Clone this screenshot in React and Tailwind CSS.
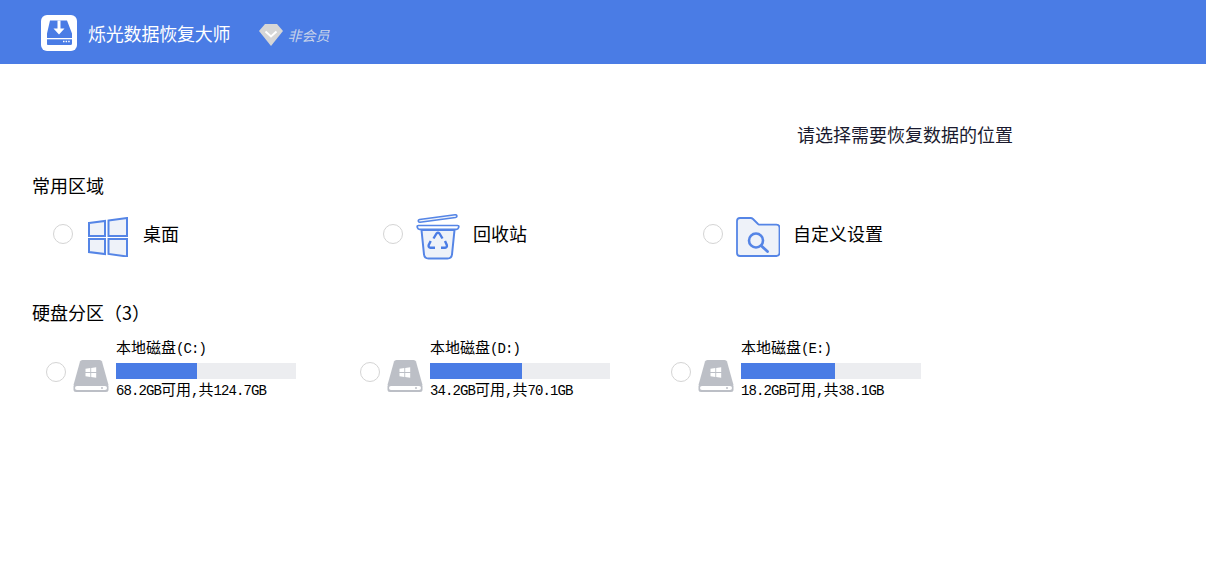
const cjk = 'font-["Noto_Sans_CJK_SC","Liberation_Sans",sans-serif]';

function Radio({ className = '' }) {
  return <div className={`w-5 h-5 rounded-full border border-[#d4d4d4] bg-white shrink-0 ${className}`} />;
}

function AppLogo() {
  return (
    <svg width="36" height="36" viewBox="0 0 36 36">
      <rect width="36" height="36" rx="6" fill="#fff" />
      <path d="M9 5.500h17l5 13v10a1.500 1.500 0 0 1-1.500 1.500h-23A1.500 1.500 0 0 1 6 28.500V18.500z" fill="#4a7ce5" />
      <path d="M6 23h25v1.300H6z" fill="#fff" />
      <path d="M22 25.800h1.500v1.400H22zM24.600 25.800h1.500v1.400h-1.500zM27.200 25.800h1.500v1.400h-1.500z" fill="#fff" />
      <path d="M16.500 5.500h3v8h4l-5.500 6-5.500-6h4z" fill="#fff" />
    </svg>
  );
}

function Diamond() {
  return (
    <svg width="24" height="22" viewBox="0 0 24 22">
      <path d="M6 0h12l6 7-12 15L0 7z" fill="#d6d6d6" />
      <path d="M6.500 7.500 12 12.500l5.500-5" fill="none" stroke="#fff" strokeWidth="2" />
    </svg>
  );
}

function WindowsIcon() {
  return (
    <svg width="40" height="40" viewBox="0 0 40 40" fill="#eef2f9" stroke="#5585e6" strokeWidth="2">
      <path d="M1 6 17 4v15H1z" />
      <path d="M20.500 3.500 39 1v18H20.500z" />
      <path d="M1 22h16v15L1 35z" />
      <path d="M20.500 22H39v17.500l-18.500-2.500z" />
    </svg>
  );
}

function RecycleIcon() {
  return (
    <svg width="44" height="46" viewBox="0 0 44 46" fill="none" stroke="#5585e6">
      <path d="M3.500 5.500 39 .8q1.700-.2 1.900 1.100.2 1.300-1.400 1.600L4 8.200q-1.500.2-1.700-1.100-.2-1.300 1.200-1.600z" strokeWidth="1.600" fill="#eef2f9" />
      <path d="M5.500 16l2.500 24.500q.5 4 4.500 4h19q4 0 4.500-4L38.500 16z" fill="#eef2f9" strokeWidth="2" />
      <path d="M2.500 11.500h39q1.500 0 1.300 1.300l-.3 1q-.4 1.500-2 1.500H3.500q-1.600 0-2-1.500l-.3-1q-.2-1.300 1.300-1.300z" fill="#fff" strokeWidth="1.700" />
      <g strokeWidth="2.400" strokeLinejoin="round" stroke="#4a7ce5">
        <path d="M17.500 24.500 20.500 19.500q1.500-1.500 3 0l3 5" />
        <path d="M29 27 30.800 31q.6 2.500-1.800 2.800H25" />
        <path d="M19 33.800h-4.500q-2.400-.3-1.800-2.800l2-4" />
      </g>
    </svg>
  );
}

function FolderIcon() {
  return (
    <svg width="44" height="40" viewBox="0 0 44 40">
      <path d="M1 4q0-3 3-3h10.500q1.500 0 2.500 1l5 5q1 .7 2 .7h16.500q3 0 3 3V36q0 3-3 3H4q-3 0-3-3z" fill="#eef2f9" stroke="#5585e6" strokeWidth="1.800" />
      <circle cx="20" cy="23.500" r="7" fill="none" stroke="#5585e6" strokeWidth="2.600" />
      <path d="M25.500 29l6 5.500" stroke="#5585e6" strokeWidth="2.800" strokeLinecap="round" />
    </svg>
  );
}

function DiskIcon() {
  return (
    <svg width="36" height="32" viewBox="0 0 36 32" className="shrink-0">
      <path d="M7 1.500Q7.500 0 9.500 0h17q2 0 2.500 1.500L35.500 25H.5z" fill="#bcbfc6" />
      <rect x="0.500" y="24" width="35" height="8" rx="2.500" fill="#bcbfc6" />
      <rect x="2" y="26" width="32" height="4" rx="2" fill="#fff" />
      <circle cx="29" cy="28" r="1" fill="#bcbfc6" />
      <path d="M12.500 8.800l4.800-.7v4h-4.800zM18.200 8l5-.7v4.800h-5zM12.500 13h4.800v4l-4.800-.7zM18.200 13h5v4.800l-5-.7z" fill="#fff" />
    </svg>
  );
}

function QuickItem({ icon, label, iconClass, className }) {
  return (
    <div className={`flex items-center h-10 ${className}`}>
      <Radio />
      <div className={`flex justify-start mt-[6px] ${iconClass}`}>{icon}</div>
      <span className={`pb-[2px] text-[18px] leading-none text-black ${cjk}`}>{label}</span>
    </div>
  );
}

function Latin({ children }) {
  return <span className="text-[14px] tracking-[-0.9px]">{children}</span>;
}

function DiskItem({ name, free, total, pct, className }) {
  return (
    <div className={`flex items-center ${className}`}>
      <Radio className="mt-1" />
      <div className="ml-[7px] mt-3"><DiskIcon /></div>
      <div className="ml-[7px] w-[180px] text-black">
        <div className={`h-[16px] text-[15px] leading-[18px] whitespace-nowrap font-["Liberation_Mono","Noto_Sans_CJK_SC",monospace]`}>
          本地磁盘<Latin>({name}:)</Latin>
        </div>
        <div className="h-4 mt-[7px] bg-[#ecedf0]">
          <div className="h-full bg-[#4a7ce5]" style={{ width: pct + '%' }} />
        </div>
        <div className={`mt-[4px] h-[16px] text-[15px] leading-[16px] whitespace-nowrap font-["Liberation_Mono","Noto_Sans_CJK_SC",monospace]`}>
          <Latin>{free}GB</Latin>可用<Latin>,</Latin>共<Latin>{total}GB</Latin>
        </div>
      </div>
    </div>
  );
}

export default function App() {
  return (
    <div className="w-[1206px] h-[561px] bg-white overflow-hidden">
      <header className="h-16 bg-[#4a7ce5] flex items-center pl-[41px] pt-[2px]">
        <AppLogo />
        <h1 className={`ml-[11px] text-[18px] font-normal tracking-[-0.2px] text-white ${cjk}`}>烁光数据恢复大师</h1>
        <div className="ml-[29px] mt-1"><Diamond /></div>
        <span className={`ml-[4px] mt-1 text-[14px] italic text-[#c9d4ea] ${cjk}`}>非会员</span>
      </header>

      <main className="px-8">
        <div className="flex justify-end pr-[161px] pt-[57px]">
          <span className={`text-[18px] leading-[26px] text-[#1a1a2e] ${cjk}`}>请选择需要恢复数据的位置</span>
        </div>

        <h2 className={`mt-[25px] text-[18px] leading-[26px] font-normal text-black ${cjk}`}>常用区域</h2>
        <div className="mt-[16px] ml-[21px] flex">
          <QuickItem className="w-[330px]" iconClass="ml-[15px] mr-[15px]" icon={<WindowsIcon />} label="桌面" />
          <QuickItem className="w-[320px]" iconClass="ml-[13px] mr-[13px]" icon={<RecycleIcon />} label="回收站" />
          <QuickItem iconClass="ml-[13px] mr-[13px]" icon={<FolderIcon />} label="自定义设置" />
        </div>

        <h2 className={`mt-[45px] text-[18px] leading-[26px] font-normal text-black ${cjk}`}>硬盘分区（3）</h2>
        <div className="mt-[15px] ml-[14px] flex">
          <DiskItem className="w-[314px]" name="C" free="68.2" total="124.7" pct={45} />
          <DiskItem className="w-[311px]" name="D" free="34.2" total="70.1" pct={51.1} />
          <DiskItem name="E" free="18.2" total="38.1" pct={52.2} />
        </div>
      </main>
    </div>
  );
}
